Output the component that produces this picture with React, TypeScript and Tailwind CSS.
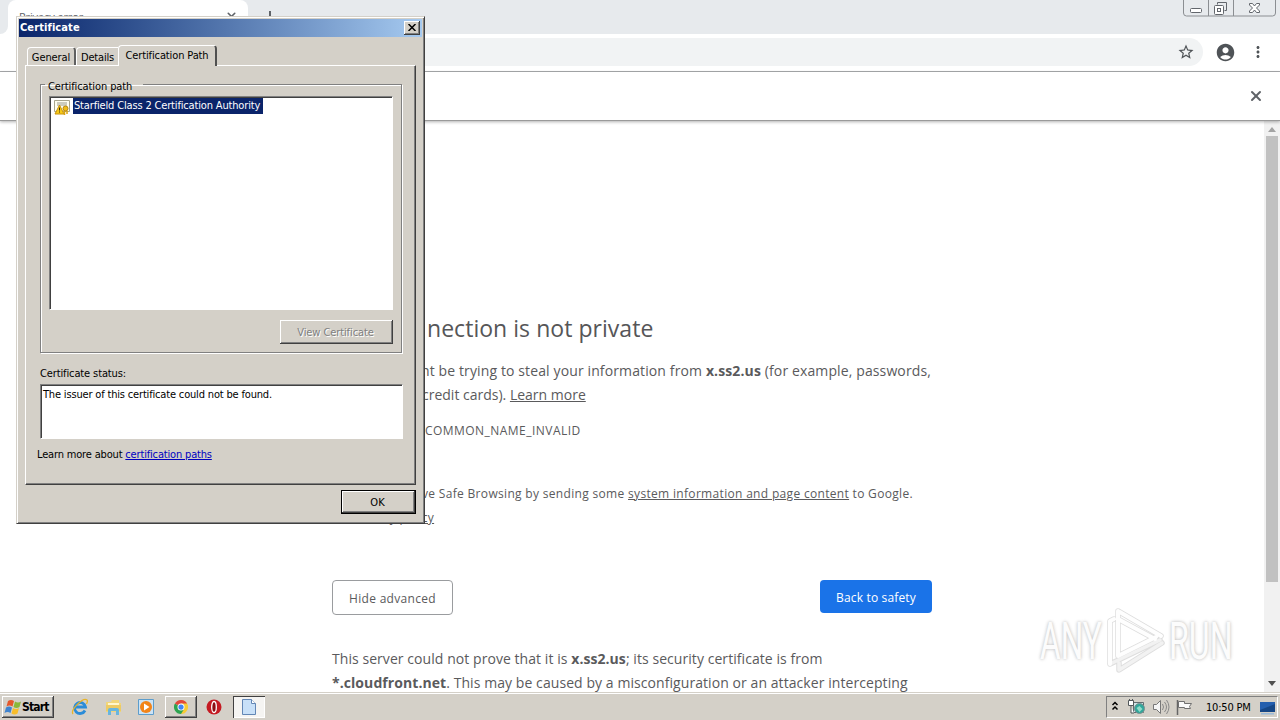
import React from "react";
import { X } from "lucide-react";
import { MdAccountCircle, MdMoreVert, MdStarBorder } from "react-icons/md";

const WindowButtons: React.FC = () => (
  <svg width="94" height="18" viewBox="0 0 94 18" fill="none" className="mr-[3px]">
    <path
      d="M.5 0v13q0 3 3 3h86q3 0 3-3V0M25.500 0v16M50.500 0v16"
      stroke="#8b8e92"
    />
    <rect x="7.500" y="8.500" width="11" height="4" rx="1" stroke="#62666c" fill="#fff" />
    <path d="M34.500 4.500v-2h9v8h-2" stroke="#62666c" />
    <rect x="31.500" y="5.500" width="9" height="9" rx="1" stroke="#62666c" fill="#fff" />
    <rect x="34.500" y="8.500" width="3" height="3" stroke="#62666c" />
    <path
      d="M66.500 3.500h3l2 2.500 2-2.500h3v1.500l-3 3 3 3v1.500h-3l-2-2.500-2 2.500h-3V11l3-3-3-3z"
      stroke="#62666c"
      fill="#fff"
    />
  </svg>
);

const BrowserTop: React.FC = () => (
  <header className="shrink-0">
    <div className="flex h-[34px] bg-[#e7eaed]">
      <div className="flex h-[34px] w-2 bg-white">
        <div className="w-full rounded-br-lg bg-[#e7eaed]" />
      </div>
      <div className="flex h-[34px] w-[240px] items-start justify-between rounded-t-lg bg-white pl-[11px] pr-[10px] pt-[9px]">
        <span className="font-['Open_Sans',sans-serif] text-[11px] leading-[15px] tracking-[-0.1px] text-[#5f6368]">
          Privacy error
        </span>
        <X className="mt-px text-[#5f6368]" size={13} strokeWidth={3} />
      </div>
      <svg width="14" height="14" viewBox="0 0 14 14" className="ml-[15px] mt-[11px]">
        <path d="M7 0v14M0 7h14" stroke="#5f6368" strokeWidth="2" />
      </svg>
      <div className="ml-auto">
        <WindowButtons />
      </div>
    </div>
    <div className="flex h-[38px] items-center border-b border-[#a9abad] bg-white pb-px pr-[13px]">
      <div className="ml-[120px] flex h-7 flex-1 items-center justify-end rounded-full bg-[#f1f3f4] pr-2">
        <MdStarBorder className="text-[#4f5357]" size={18} />
      </div>
      <MdAccountCircle className="ml-3 text-[#4f5357]" size={21} />
      <MdMoreVert className="ml-[13px] text-[#4f5357]" size={18} />
    </div>
    <div className="relative flex h-[49px] items-center justify-end border-b border-[#9a9a9a] bg-white pr-4 shadow-[0_1px_3px_rgba(0,0,0,0.3)]">
      <X className="text-[#5f6368]" size={16} strokeWidth={3} />
    </div>
  </header>
);

const Interstitial: React.FC = () => (
  <main className="flex flex-1 flex-col overflow-hidden pl-[332px] font-['Open_Sans','Noto_Sans',sans-serif] text-[14px] leading-6 whitespace-nowrap text-[#5a5a5c]">
    <h1 className="mt-[191px] h-8 pl-[95px] text-[23px] leading-8 tracking-[0.04px] text-[#565658]">
      nection is not private
    </h1>
    <p className="mt-[15px] pl-[89px] tracking-[0.12px]">
      ht be trying to steal your information from <b>x.ss2.us</b> (for example,
      passwords,
    </p>
    <p className="pl-[90px]">
      credit cards). <a className="underline">Learn more</a>
    </p>
    <p className="mt-3 pl-[93px] text-[12px] tracking-[0.46px]">
      COMMON_NAME_INVALID
    </p>
    <p className="mt-[39px] pl-[90px] text-[12px] tracking-[0.32px]">
      ve Safe Browsing by sending some{" "}
      <a className="underline">system information and page content</a> to
      Google.
    </p>
    <p className="pl-[22px] text-[12px] tracking-[0.36px]">
      <a className="underline">Privacy policy</a>
    </p>
    <div className="mt-[50px] flex w-[600px] items-start justify-between text-[12px]">
      <button className="h-[35px] w-[121px] rounded border border-[#9a9c9f] pt-[3px] tracking-[0.3px]">
        Hide advanced
      </button>
      <button className="h-[33px] w-[112px] rounded bg-[#1a73e8] pt-[3px] tracking-[0.15px] text-white">
        Back to safety
      </button>
    </div>
    <p className="mt-8 tracking-[0.06px]">
      This server could not prove that it is <b>x.ss2.us</b>; its security
      certificate is from
    </p>
    <p className="tracking-[0.07px]">
      <b>*.cloudfront.net</b>. This may be caused by a misconfiguration or an
      attacker intercepting
    </p>
  </main>
);

const Scrollbar: React.FC = () => (
  <div className="flex w-4 flex-col items-center bg-[#f1f1f1] pb-[6px] pt-[6px]">
    <svg width="8" height="5" viewBox="0 0 8 5">
      <path d="M0 5l4-5 4 5z" fill="#a3a3a3" />
    </svg>
    <div className="mt-1 h-[446px] w-3 bg-[#c1c1c1]" />
    <svg width="8" height="5" viewBox="0 0 8 5" className="mt-auto">
      <path d="M0 0h8L4 5z" fill="#505050" />
    </svg>
  </div>
);

const CertIcon: React.FC = () => (
  <svg width="16" height="16" viewBox="0 0 16 16">
    <path d="M.5 1.500h15v11H.5z" fill="#fffef0" stroke="#a8a58c" />
    <path d="M3 4h10M3 6h10" stroke="#9a9a8c" />
    <path d="M5.500 6L10 15H1z" fill="#f7ca18" stroke="#c8920a" />
    <path d="M5.500 8.500v3M5.500 12.500v1" stroke="#3c2c00" />
    <circle cx="11.500" cy="9.500" r="2.500" fill="#f0bc16" stroke="#b8860b" />
    <path d="M10.500 12v4M13 12v3" stroke="#dba510" strokeWidth="1.500" />
  </svg>
);

const CertificateDialog: React.FC = () => (
  <div className="absolute left-4 top-4 flex h-[508px] w-[409px] flex-col border border-b-[#404040] border-l-[#d4d0c8] border-r-[#404040] border-t-[#d4d0c8] bg-[#d4d0c8] p-0.5 font-['DejaVu_Sans_Condensed','DejaVu_Sans',sans-serif] text-[11px] whitespace-nowrap text-black shadow-[inset_1px_1px_#fff,inset_-1px_-1px_#808080] [font-stretch:condensed]">
    <div className="flex h-[18px] shrink-0 items-center justify-between bg-linear-to-r from-[#0a246a] to-[#a6caf0] pl-px pr-0.5 text-white">
      <b className="pt-px tracking-[0.1px]">Certificate</b>
      <button className="flex h-[14px] w-4 items-center justify-center bg-[#d4d0c8] shadow-[inset_-1px_-1px_#404040,inset_1px_1px_#fff,inset_-2px_-2px_#808080]">
        <svg width="8" height="7" viewBox="0 0 8 7" className="mb-px">
          <path d="M.5 0l7 7M7.500 0l-7 7" stroke="#000" strokeWidth="1.500" />
        </svg>
      </button>
    </div>
    <div className="flex flex-1 flex-col px-[6px] pb-[7px] pt-2">
      <div className="relative z-10 flex h-[20px] shrink-0 items-end pl-0.5">
        <div className="flex h-[18px] w-[49px] items-center justify-center rounded-t-sm border-l border-r-2 border-t border-l-white border-r-[#606060] border-t-white pt-[3px] tracking-[-0.1px]">
          General
        </div>
        <div className="flex h-[18px] w-[42px] items-center justify-center rounded-tl-sm border-l border-t border-white pt-[3px] tracking-[-0.2px]">
          Details
        </div>
        <div className="-mb-px flex h-[21px] w-[99px] items-start justify-center rounded-t-sm border-l border-r-2 border-t border-l-white border-r-[#505050] border-t-white bg-[#d4d0c8] pt-0.5 leading-4 tracking-[-0.12px]">
          Certification Path
        </div>
      </div>
      <div className="flex h-[420px] w-[391px] shrink-0 flex-col border border-b-[#404040] border-l-white border-r-[#404040] border-t-white px-[14px] shadow-[inset_-1px_-1px_#808080]">
        <fieldset className="mt-[14px] flex h-[273px] w-[362px] shrink-0 flex-col border border-[#808080] px-2 shadow-[1px_1px_#fff,inset_1px_1px_#fff]">
          <legend className="-ml-1 h-[9px] w-[98px] pl-[3px] leading-[14px] tracking-[-0.1px]">
            Certification path
          </legend>
          <div className="mt-[7px] flex h-[214px] items-start border border-b-white border-l-[#808080] border-r-white border-t-[#808080] bg-white pl-1 shadow-[inset_1px_1px_#404040]">
            <div className="mt-0.5">
              <CertIcon />
            </div>
            <span className="ml-[3px] mt-px h-4 w-[190px] bg-[#0a246a] pl-px leading-4 tracking-[-0.16px] text-white">
              Starfield Class 2 Certification Authority
            </span>
          </div>
          <button className="ml-auto mt-[10px] h-6 w-[113px] pr-0.5 pt-0.5 tracking-[-0.1px] text-[#808080] shadow-[inset_-1px_-1px_#404040,inset_1px_1px_#fff,inset_-2px_-2px_#808080] [text-shadow:1px_1px_#fff]">
            View Certificate
          </button>
        </fieldset>
        <p className="mt-[13px] leading-[16px] tracking-[-0.12px]">
          Certificate status:
        </p>
        <div className="mt-0.5 h-[55px] w-[363px] shrink-0 border border-b-white border-l-[#808080] border-r-white border-t-[#808080] bg-white pl-0.5 pt-0.5 leading-4 tracking-[-0.17px] shadow-[inset_1px_1px_#404040]">
          The issuer of this certificate could not be found.
        </div>
        <p className="-ml-[3px] mt-2 leading-4 tracking-[-0.17px]">
          Learn more about{" "}
          <a className="text-[#0000c0] underline">certification paths</a>
        </p>
      </div>
      <button className="ml-auto mt-auto h-6 w-[75px] border border-black pr-0.5 pt-0.5 shadow-[inset_-1px_-1px_#404040,inset_1px_1px_#fff,inset_-2px_-2px_#808080]">
        OK
      </button>
    </div>
  </div>
);

const Watermark: React.FC = () => (
  <div className="absolute left-[1040px] top-[604px] flex h-[74px] w-[200px] items-center font-['Roboto',sans-serif] text-[51px] leading-none text-[#fcfcfc] [text-shadow:0_0_5px_#c4c4c4,0_0_3px_#dedede]">
    <span className="w-[64px] shrink-0">
      <span className="inline-block origin-left scale-x-[0.62]">ANY</span>
    </span>
    <svg width="62" height="70" viewBox="0 0 62 70" fill="none" className="mr-0.5 shrink-0">
      <g strokeLinejoin="round" strokeLinecap="round">
        <path
          d="M10 13l-4 2v43M51 33L14 13V5l43 25M14 5v45l38-19M6 58l50-24M15 57v7l43-27"
          stroke="#dedede"
          strokeWidth="5.500"
        />
        <path
          d="M6 58l50-24M15 57v7l43-27"
          stroke="#f2f2f2"
          strokeWidth="3.500"
        />
        <path
          d="M10 13l-4 2v43M51 33L14 13V5l43 25M14 5v45l38-19"
          stroke="#fefefe"
          strokeWidth="4"
        />
      </g>
    </svg>
    <span className="ml-px">
      <span className="inline-block origin-left scale-x-[0.63]">RUN</span>
    </span>
  </div>
);

const StartFlag: React.FC = () => (
  <svg width="18" height="17" viewBox="0 0 18 17">
    <path d="M4 2q3-2 6 0L8.500 7.500q-3-2-6 0z" fill="#e5582b" />
    <path d="M11 2.500q3 2 6 0L15.500 8q-3 2-6 0z" fill="#8ab839" />
    <path d="M2 8.500q3-2 6 0L6.500 14q-3-2-6 0z" fill="#3f83cf" />
    <path d="M9 9q3 2 6 0l-1.500 5.500q-3 2-6 0z" fill="#f8bd2b" />
  </svg>
);

const IeIcon: React.FC = () => (
  <svg width="18" height="18" viewBox="0 0 18 18" fill="none">
    <path d="M14 12.500A5.500 5.500 0 1 1 14.500 9H5" stroke="#2b8cd8" strokeWidth="2.800" />
    <path d="M2 16C-1 12 12-1 16 2q1 1-.5 4" stroke="#e8b428" strokeWidth="1.300" />
  </svg>
);

const FolderIcon: React.FC = () => (
  <svg width="17" height="17" viewBox="0 0 17 17">
    <path d="M1 3h5l1-2h7v3h2v9H1z" fill="#f1d67a" />
    <path d="M3 4h11v3H3z" fill="#fff6cc" />
    <path d="M1 6h15v6H1z" fill="#edcb65" />
    <path d="M3 16v-5q0-2 2-2h7q2 0 2 2v5h-3v-4H6v4z" fill="#68b5de" />
  </svg>
);

const MediaIcon: React.FC = () => (
  <svg width="16" height="16" viewBox="0 0 16 16">
    <path d="M.5.500h15v15H.5z" fill="#cce3f5" stroke="#5c9dcc" />
    <circle cx="8" cy="8" r="6" fill="#f28418" />
    <path d="M6 4.500v7L11.500 8z" fill="#fff" />
  </svg>
);

const ChromeIcon: React.FC = () => (
  <svg width="14" height="14" viewBox="0 0 16 16">
    <path d="M8 8V0a8 8 0 0 1 6.930 4A8 8 0 0 1 8 16z" fill="#f8cb35" />
    <path d="M8 8L1.070 4A8 8 0 0 0 8 16l3-5z" fill="#2da450" />
    <path d="M1.070 4a8 8 0 0 1 13.860 0H8v4z" fill="#e2473b" />
    <circle cx="8" cy="8" r="4" fill="#fff" />
    <circle cx="8" cy="8" r="3" fill="#4285f4" />
  </svg>
);

const OperaIcon: React.FC = () => (
  <svg width="16" height="16" viewBox="0 0 16 16">
    <circle cx="8" cy="8" r="7.500" fill="#c51a22" />
    <ellipse cx="8" cy="8" rx="2.300" ry="5.500" fill="#8c0d12" stroke="#fff" strokeWidth="1.300" />
  </svg>
);

const PageIcon: React.FC = () => (
  <svg width="14" height="16" viewBox="0 0 14 16">
    <path d="M.5.500h9l4 4v11H.5z" fill="#c8e0f8" stroke="#6286b5" />
    <path d="M9.500.500v4h4" fill="#fff" stroke="#6286b5" />
  </svg>
);

const TrayIcons: React.FC = () => (
  <svg width="84" height="18" viewBox="0 0 84 18" fill="none">
    <path d="M1.500 7L4 4.500 6.500 7M1.500 11.500L4 9l2.500 2.500" stroke="#000" strokeWidth="1.500" />
    <path d="M22.500 4.500h10v10h-10z" fill="#cfe3e6" stroke="#626c70" />
    <path d="M17.500 2.500h5v5h-5zM18.500 1v2M21.500 1v2M20 8v7h3" fill="#fff" stroke="#52585a" />
    <circle cx="28.500" cy="10.500" r="5" fill="#30a79b" stroke="#7d8f8f" />
    <path d="M25.500 10l3-2 3 3-3 3z" fill="#91dbc8" />
    <path d="M42.500 6.500h3l4-4v13l-4-4h-3z" fill="#f5f5f5" stroke="#777" />
    <path d="M51.500 6q2 3 0 6M53.500 4q4 5 0 10M55.500 2q5 7 0 14" stroke="#888" />
    <path d="M66.500 2v15" stroke="#666" strokeWidth="1.500" />
    <path d="M67.500 3.500h6v2h7l-2 3 1 2h-6v-1h-6z" fill="#fafafa" stroke="#707070" />
  </svg>
);

const Taskbar: React.FC = () => (
  <footer className="relative flex h-7 shrink-0 items-center border-t border-[#d4d0c8] bg-[#d4d0c8] font-['DejaVu_Sans_Condensed','DejaVu_Sans',sans-serif] text-[11px] shadow-[inset_0_1px_#fff] [font-stretch:condensed]">
    <button className="ml-0.5 mt-px flex h-[22px] w-[52px] items-center pl-0.5 shadow-[inset_-1px_-1px_#404040,inset_1px_1px_#fff,inset_-2px_-2px_#808080]">
      <StartFlag />
      <b className="text-[12px] tracking-[-0.8px]">Start</b>
    </button>
    <div className="ml-[17px] mt-px flex items-center gap-4">
      <IeIcon />
      <FolderIcon />
      <MediaIcon />
    </div>
    <div className="ml-[11px] mt-px flex h-[22px] w-8 items-center justify-center shadow-[inset_-1px_-1px_#404040,inset_1px_1px_#fff,inset_-2px_-2px_#808080]">
      <ChromeIcon />
    </div>
    <div className="ml-[9px] mt-px">
      <OperaIcon />
    </div>
    <div className="ml-[11px] mt-px flex h-[22px] w-8 items-center justify-center bg-[#f5f4f2] shadow-[inset_1px_1px_#404040,inset_-1px_-1px_#fff]">
      <PageIcon />
    </div>
    <div className="ml-auto mr-0.5 mt-px flex h-[22px] w-[172px] items-center border border-b-white border-l-[#808080] border-r-white border-t-[#808080] pl-1">
      <TrayIcons />
      <span className="ml-[11px] w-[54px] pt-0.5 whitespace-nowrap tracking-[-0.2px]">
        10:50 PM
      </span>
      <svg width="15" height="13" viewBox="0 0 15 13" className="mt-0.5">
        <path d="M0 0h15v10H0z" fill="#245fae" />
        <path d="M0 8L15 2v8H0z" fill="#164786" />
        <path d="M1 11h13v1.500H1z" fill="#9bbbd9" />
      </svg>
    </div>
  </footer>
);

export default function App() {
  return (
    <div className="relative flex h-[720px] w-[1280px] flex-col overflow-hidden bg-white">
      <BrowserTop />
      <div className="flex min-h-0 flex-1">
        <Interstitial />
        <Scrollbar />
      </div>
      <Watermark />
      <CertificateDialog />
      <Taskbar />
    </div>
  );
}
